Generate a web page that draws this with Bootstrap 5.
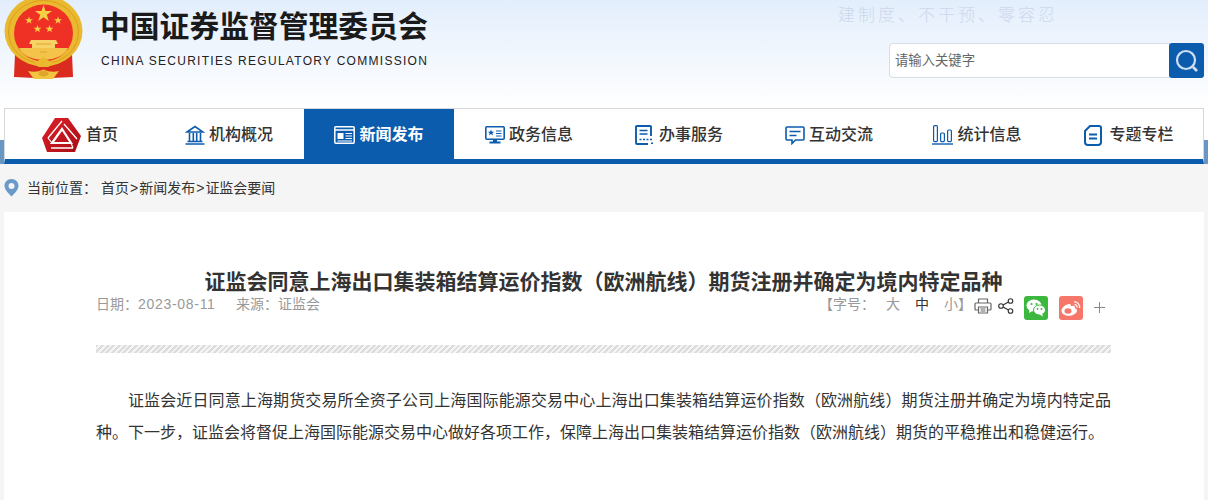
<!DOCTYPE html>
<html lang="zh-CN">
<head>
    <meta charset="UTF-8">
    <meta name="viewport" content="width=device-width, initial-scale=1.0">
    <title>证监会同意上海出口集装箱结算运价指数&#xFF08;欧洲航线&#xFF09;期货注册并确定为境内特定品种</title>
    <link href="https://cdn.jsdelivr.net/npm/bootstrap@5.3.0/dist/css/bootstrap.min.css" rel="stylesheet">
    <style>
        body {
            background: #f5f5f5;
            font-family: "Liberation Sans", "Noto Sans CJK SC", sans-serif;
            color: #333;
            height: 500px;
            overflow: hidden;
        }
        /* top band */
        .site-head {
            height: 108px;
            background: linear-gradient(#e3eefc, #fff);
            overflow: hidden;
        }
        .emblem { margin-right: 10px; flex: none; }
        .brand-cn {
            margin-top: 6px;
            font-size: 29.8px;
            line-height: 42px;
            font-weight: 700;
            color: #1a1a1a;
            white-space: nowrap;
        }
        .brand-en {
            margin: 3px 0 0 1px;
            font-size: 12px;
            line-height: 20px;
            letter-spacing: 1.28px;
            color: #222;
            white-space: nowrap;
        }
        .head-right { width: 315px; margin-right: 4px; }
        .motto {
            margin: 2px 0 0 -51px;
            font-family: "Noto Sans CJK SC", sans-serif;
            font-weight: 300;
            font-size: 17px;
            line-height: 24px;
            letter-spacing: 3px;
            color: #cbd9eb;
            white-space: nowrap;
        }
        .search-box { margin-top: 17px; height: 35px; }
        .search-box .form-control {
            height: 35px;
            border: 1px solid #d8dce3;
            border-radius: 4px 0 0 4px;
            padding: 0 5px;
            font-size: 13.33px;
            box-shadow: none;
        }
        .search-box .form-control::placeholder { color: #666; }
        .search-btn {
            width: 35px;
            height: 35px;
            flex: none;
            padding: 0;
            margin-left: -1px;
            background: #0c5cae;
            border: 0;
            border-radius: 3px;
        }
        /* nav */
        .nav-wrap {
            padding: 0 4px;
            background: linear-gradient(#fff 32px, #6a96c6 32px);
        }
        .main-nav {
            height: 56px;
            background: #fff;
            border-top: 1px solid #d5d9de;
            border-left: 1px solid #d5d9de;
            border-right: 1px solid #d5d9de;
            border-bottom: 5px solid #0c5cae;
            flex-wrap: nowrap;
            margin: 0;
        }
        .main-nav .nav-item { width: 150px; flex: none; }
        .main-nav .nav-item:first-child { margin-left: -1px; }
        .main-nav .nav-link {
            height: 50px;
            padding: 2px 0 0;
            gap: 4px;
            color: #333;
            font-size: 16px;
            font-weight: 500;
            white-space: nowrap;
        }
        .main-nav .nav-link.active { background: #0c5cae; color: #fff; font-weight: 700; }
        .main-nav .nav-link.nav-home { padding-left: 2px; }
        .home-logo { margin-right: 1px; }
        .nav-topic-icon { margin-right: 3px; }
        /* breadcrumb */
        .crumb-bar {
            height: 48px;
            padding-left: 4px;
            gap: 8px;
            font-size: 14px;
            color: #333;
        }
        .crumb-bar a { color: #333; text-decoration: none; }
        .crumb-where { margin-right: -4px; width: 70px; white-space: nowrap; }
        .crumb-sep { margin: 0 1px; }
        /* article */
        .article-box {
            margin: 0 4px;
            height: 288px;
            padding: 56px 93px 0 92px;
            background: #fff;
        }
        .article-title {
            margin: 0;
            font-size: 21px;
            line-height: 28px;
            font-weight: 700;
            color: #333;
            text-align: center;
            white-space: nowrap;
        }
        .meta-row {
            height: 24px;
            font-size: 14px;
            color: #999;
        }
        .meta-left, .size-tool { margin-top: -8px; white-space: nowrap; }
        .meta-date { letter-spacing: .7px; }
        .meta-from { margin-left: 20.500px; }
        .size-tool { margin-right: 2px; }
        .size-opt { margin-left: 15px; }
        .size-big { margin-left: 11px; }
        .size-on { color: #333; }
        .tool-icon { flex: none; margin-top: -4px; }
        .print-icon { margin-right: 6px; }
        .share-app { width: 24px; height: 24px; border-radius: 3px; flex: none; }
        .wechat-app { background: #3cb83f; margin-left: 10px; }
        .weibo-app { background: #f6776a; margin-left: 11px; }
        .plus-icon { margin: -2px 6px 0 11px; flex: none; }
        .stripe-line {
            height: 8px;
            margin-top: 25px;
            background: repeating-linear-gradient(135deg, #dcdcdc 0 2px, #f4f4f4 2px 4px);
        }
        .article-text {
            margin: 32px 0 0;
            font-size: 16px;
            line-height: 32px;
            color: #333;
            text-indent: 32px;
            text-align: justify;
        }
    </style>
</head>
<body>
    <header class="site-head d-flex">
        <svg class="emblem" width="90" height="82" viewBox="0 0 90 82" role="img" aria-label="国徽">
            <!-- ribbons sit under the ring -->
            <path d="M15 54 L36 66 L35 78 L14 77 Z" fill="#db2a1e"/>
            <path d="M72 54 L51 66 L52 78 L73 77 Z" fill="#db2a1e"/>
            <rect x="30" y="62" width="27" height="10" fill="#db2a1e"/>
            <ellipse cx="43.500" cy="31" rx="39" ry="35.500" fill="#eab92f"/>
            <ellipse cx="43.500" cy="32" rx="35" ry="31.500" fill="none" stroke="#d99f1f" stroke-width="1"/>
            <ellipse cx="43.500" cy="33" rx="29.500" ry="28.500" fill="#ee3124"/>
            <path d="M31 40 H56 L58 44 H55 V48 H32 V44 H29 Z" fill="#f7d267"/>
            <path d="M19 48 H68 Q63 59 43.500 60 Q24 59 19 48 Z" fill="#f4c44a"/>
            <path d="M36 44 H51 M40 52 H47" stroke="#e0a52b" stroke-width="1"/>
            <path d="M43.500 5 l2 6 h6.500 l-5.200 3.800 2 6.200 -5.300 -3.800 -5.300 3.800 2 -6.200 -5.200 -3.800 h6.500 Z" fill="#f7cf45"/>
            <path d="M29 16.500 l1 2.700 h3 l-2.400 1.800 .9 2.800 -2.500 -1.700 -2.500 1.700 .9 -2.800 -2.400 -1.800 h3 Z" fill="#f7cf45"/>
            <path d="M58 16.500 l1 2.700 h3 l-2.400 1.800 .9 2.800 -2.500 -1.700 -2.500 1.700 .9 -2.800 -2.400 -1.800 h3 Z" fill="#f7cf45"/>
            <path d="M37.500 25 l1 2.700 h3 l-2.400 1.800 .9 2.800 -2.500 -1.700 -2.500 1.700 .9 -2.800 -2.400 -1.800 h3 Z" fill="#f7cf45"/>
            <path d="M49.500 25 l1 2.700 h3 l-2.400 1.800 .9 2.800 -2.500 -1.700 -2.500 1.700 .9 -2.800 -2.400 -1.800 h3 Z" fill="#f7cf45"/>
            <path d="M43.500 57 l9 6 l-4 4 h-10 l-4 -4 Z" fill="#eab92f"/>
            <path d="M28 71 q8 2 15.500 -1.500 q7.500 3.500 15.500 1.500 l-6 8 h-19 Z" fill="#f2c541"/>
            <ellipse cx="43.500" cy="73.500" rx="5" ry="3" fill="#e0a52b"/>
        </svg>
        <div class="flex-grow-1">
            <div class="brand-cn">中国证券监督管理委员会</div>
            <div class="brand-en">CHINA SECURITIES REGULATORY COMMISSION</div>
        </div>
        <div class="head-right">
            <div class="motto">建制度、不干预、零容忍</div>
            <form class="search-box d-flex">
                <input class="form-control" type="text" placeholder="请输入关键字">
                <button class="search-btn btn d-flex align-items-center justify-content-center" type="button" aria-label="搜索">
                    <svg width="26" height="26" viewBox="0 0 26 26" fill="none" stroke="#cfe0f3">
                        <circle cx="12" cy="12" r="9" stroke-width="2.200"/>
                        <path d="M19 19 l4 4" stroke-width="2.600"/>
                    </svg>
                </button>
            </form>
        </div>
    </header>

    <div class="nav-wrap">
        <ul class="nav main-nav">
            <li class="nav-item">
                <a class="nav-link nav-home d-flex align-items-center justify-content-center" href="#">
                    <svg class="home-logo" width="39" height="34" viewBox="0 0 39 34">
                        <defs>
                            <linearGradient id="redKnot" x1="0" y1="0" x2="1" y2="1">
                                <stop offset="0" stop-color="#e0202a"/>
                                <stop offset="1" stop-color="#a80d14"/>
                            </linearGradient>
                        </defs>
                        <path d="M13 0 H26 L39 18 L33 34 H5 L0 20 Z" fill="url(#redKnot)"/>
                        <path d="M20 3 L6 20 M22 6 L35 21 M9 30 H31" fill="none" stroke="#fff" stroke-width="1.300"/>
                        <path d="M20 11 L29 25 H10 Z" fill="none" stroke="#fff" stroke-width="2.200"/>
                        <path d="M10 25 L6 20 M29 25 L31 30" fill="none" stroke="#fff" stroke-width="1.200"/>
                    </svg>
                    首页
                </a>
            </li>
            <li class="nav-item">
                <a class="nav-link d-flex align-items-center justify-content-center" href="#">
                    <svg width="20" height="20" viewBox="0 0 20 20" fill="none" stroke="#0c5cae" stroke-width="1.600">
                        <path d="M2 7 L10 1.500 L18 7 Z"/>
                        <path d="M4.500 8 V16 M8.300 8 V16 M11.700 8 V16 M15.500 8 V16"/>
                        <path d="M2.500 16.500 H17.500 M.5 19 H19.500"/>
                    </svg>
                    机构概况
                </a>
            </li>
            <li class="nav-item">
                <a class="nav-link active d-flex align-items-center justify-content-center" href="#">
                    <svg width="21" height="18" viewBox="0 0 21 18" fill="none" stroke="#fff" stroke-width="1.500">
                        <rect x=".8" y=".8" width="19.400" height="16.400" rx="1"/>
                        <path d="M.8 4 H20.200"/>
                        <rect x="3.500" y="7" width="6" height="6" fill="#fff" stroke="none"/>
                        <path d="M11.500 7.500 H18 M11.500 10 H18 M11.500 12.500 H18 M3.500 15 H18" stroke-width="1.100"/>
                    </svg>
                    新闻发布
                </a>
            </li>
            <li class="nav-item">
                <a class="nav-link d-flex align-items-center justify-content-center" href="#">
                    <svg width="20" height="18" viewBox="0 0 20 18">
                        <rect x=".8" y=".8" width="18.400" height="12.400" rx="1" fill="none" stroke="#0c5cae" stroke-width="1.600"/>
                        <path d="M6 3.500 l.9 2.200 h2.300 l-1.800 1.500 .7 2.300 -2.100 -1.400 -2.100 1.400 .7 -2.300 -1.800 -1.500 h2.300 Z" fill="#0c5cae"/>
                        <path d="M11 5 H16.500 M11 7.500 H16.500 M11 10 H16.500" stroke="#0c5cae" stroke-width="1.100"/>
                        <path d="M8 14 H12 V15.500 H15.500 V17.500 H4.500 V15.500 H8 Z" fill="#0c5cae"/>
                    </svg>
                    政务信息
                </a>
            </li>
            <li class="nav-item">
                <a class="nav-link d-flex align-items-center justify-content-center" href="#">
                    <svg width="20" height="20" viewBox="0 0 20 20" fill="none" stroke="#0c5cae" stroke-width="1.900">
                        <path d="M16 11 V2 Q16 1 15 1 H2 Q1 1 1 2 V18 Q1 19 2 19 H13"/>
                        <path d="M4.500 5.500 H12.500 M4.500 9 H12.500" stroke-width="1.500"/>
                        <path d="M4.500 14.500 H6.500 M8 14.500 H10 M11.500 14.500 H13.500 M15 14.500 H17 M16 18.300 H18" stroke-width="1.600"/>
                    </svg>
                    办事服务
                </a>
            </li>
            <li class="nav-item">
                <a class="nav-link d-flex align-items-center justify-content-center" href="#">
                    <svg width="20" height="19" viewBox="0 0 20 19" fill="none" stroke="#0c5cae" stroke-width="1.600">
                        <path d="M2 1 H18 Q19 1 19 2 V13 Q19 14 18 14 H10.500 L7 17.500 V14 H2 Q1 14 1 13 V2 Q1 1 2 1 Z"/>
                        <path d="M4.500 5.500 H15.500 M4.500 9.500 H11.500" stroke-width="1.400"/>
                    </svg>
                    互动交流
                </a>
            </li>
            <li class="nav-item">
                <a class="nav-link pe-1 d-flex align-items-center justify-content-center" href="#">
                    <svg width="21" height="20" viewBox="0 0 21 20" fill="none" stroke="#0c5cae" stroke-width="1.200">
                        <rect x="1.600" y=".6" width="3.800" height="16" rx="1"/>
                        <rect x="8.600" y="8" width="3.800" height="8.600" rx="1"/>
                        <rect x="15.600" y="5" width="3.800" height="11.600" rx="1"/>
                        <path d="M0 19 H21" stroke-width="1.400"/>
                    </svg>
                    统计信息
                </a>
            </li>
            <li class="nav-item">
                <a class="nav-link d-flex align-items-center justify-content-center" href="#">
                    <svg class="nav-topic-icon" width="18" height="21" viewBox="0 0 18 21" fill="none" stroke="#0c5cae" stroke-width="2">
                        <path d="M6 1 H15 Q17 1 17 3 V17 Q17 20 14 20 H4 Q1 20 1 17 V6 Z"/>
                        <path d="M5 9.500 H13 M5 13.500 H13" stroke-width="1.800"/>
                    </svg>
                    专题专栏
                </a>
            </li>
        </ul>
    </div>

    <div class="crumb-bar d-flex align-items-center">
        <svg width="15" height="18" viewBox="0 0 15 18">
            <path d="M7.500 0 C3.300 0 .5 3 .5 6.800 C.5 11 5 15 7.500 17.500 C10 15 14.500 11 14.500 6.800 C14.500 3 11.700 0 7.500 0 Z M7.500 4 A3 3 0 1 1 7.500 10 A3 3 0 1 1 7.500 4 Z" fill="#6a9ac9" fill-rule="evenodd"/>
        </svg>
        <span class="crumb-where">当前位置&#xFF1A;</span>
        <span><a href="#">首页</a><span class="crumb-sep">&gt;</span><a href="#">新闻发布</a><span class="crumb-sep">&gt;</span><a href="#">证监会要闻</a></span>
    </div>

    <main class="article-box">
        <h1 class="article-title">证监会同意上海出口集装箱结算运价指数&#xFF08;欧洲航线&#xFF09;期货注册并确定为境内特定品种</h1>
        <div class="meta-row d-flex justify-content-between align-items-center">
            <div class="meta-left">日期&#xFF1A;<span class="meta-date">2023-08-11</span><span class="meta-from">来源&#xFF1A;证监会</span></div>
            <div class="d-flex align-items-center">
                <span class="size-tool">【字号&#xFF1A;<span class="size-big">大</span><span class="size-opt size-on">中</span><span class="size-opt">小</span>】</span>
                <svg class="tool-icon print-icon" width="18" height="16" viewBox="0 0 18 16" fill="none" stroke="#666" stroke-width="1.200">
                    <path d="M4.500 5 V1 H13.500 V5"/>
                    <path d="M4 12 H2 Q1 12 1 11 V6 Q1 5 2 5 H16 Q17 5 17 6 V11 Q17 12 16 12 H14"/>
                    <path d="M4.500 9 H13.500 V15 H4.500 Z M6.500 11 H11.500 M6.500 13 H11.500"/>
                </svg>
                <svg class="tool-icon" width="16" height="16" viewBox="0 0 16 16" fill="none" stroke="#333" stroke-width="1.100">
                    <circle cx="12.500" cy="3" r="2.300"/>
                    <circle cx="3" cy="8" r="2.300"/>
                    <circle cx="12.500" cy="13" r="2.300"/>
                    <path d="M5 7 L10.500 4 M5 9 L10.500 12"/>
                </svg>
                <span class="share-app wechat-app d-flex align-items-center justify-content-center">
                    <svg width="20" height="18" viewBox="0 0 20 18">
                        <ellipse cx="8" cy="6.500" rx="7.500" ry="6" fill="#fff"/>
                        <path d="M3.500 10 L3 14 L7 11.500 Z" fill="#fff"/>
                        <ellipse cx="13.500" cy="11" rx="6" ry="5" fill="#fff" stroke="#3cb83f"/>
                        <path d="M16 14.500 L17 17.500 L13.500 15.500 Z" fill="#fff"/>
                        <circle cx="5.500" cy="5" r="1.100" fill="#3cb83f"/>
                        <circle cx="10.500" cy="5" r="1.100" fill="#3cb83f"/>
                        <circle cx="11.500" cy="10" r=".9" fill="#3cb83f"/>
                        <circle cx="15.500" cy="10" r=".9" fill="#3cb83f"/>
                    </svg>
                </span>
                <span class="share-app weibo-app d-flex align-items-center justify-content-center">
                    <svg width="20" height="18" viewBox="0 0 20 18">
                        <path d="M8 5 C3.500 6 .5 9 .5 11.800 C.5 14.800 4 16.800 8 16.800 C12.500 16.800 16 14 16 11.500 C16 10 14.500 9.500 13.800 9.200 C14.500 7.500 13.500 6.500 11 7 C10.500 7.200 9.800 7.400 9.800 7.400 C10.200 5.500 9.500 4.600 8 5 Z" fill="#fff"/>
                        <ellipse cx="7" cy="12" rx="3.500" ry="2.800" fill="#f6776a"/>
                        <path d="M13 3 A5 5 0 0 1 18.500 9 M13.500 5.500 A2.500 2.500 0 0 1 16 8.500" fill="none" stroke="#fff" stroke-width="1.200"/>
                    </svg>
                </span>
                <svg class="plus-icon" width="11" height="11" viewBox="0 0 11 11" stroke="#888" stroke-width="1">
                    <path d="M5.500 0 V11 M0 5.500 H11"/>
                </svg>
            </div>
        </div>
        <div class="stripe-line"></div>
        <p class="article-text">证监会近日同意上海期货交易所全资子公司上海国际能源交易中心上海出口集装箱结算运价指数&#xFF08;欧洲航线&#xFF09;期货注册并确定为境内特定品种&#x3002;下一步&#xFF0C;证监会将督促上海国际能源交易中心做好各项工作&#xFF0C;保障上海出口集装箱结算运价指数&#xFF08;欧洲航线&#xFF09;期货的平稳推出和稳健运行&#x3002;</p>
    </main>

    <script src="https://cdn.jsdelivr.net/npm/bootstrap@5.3.0/dist/js/bootstrap.bundle.min.js"></script>
</body>
</html>
